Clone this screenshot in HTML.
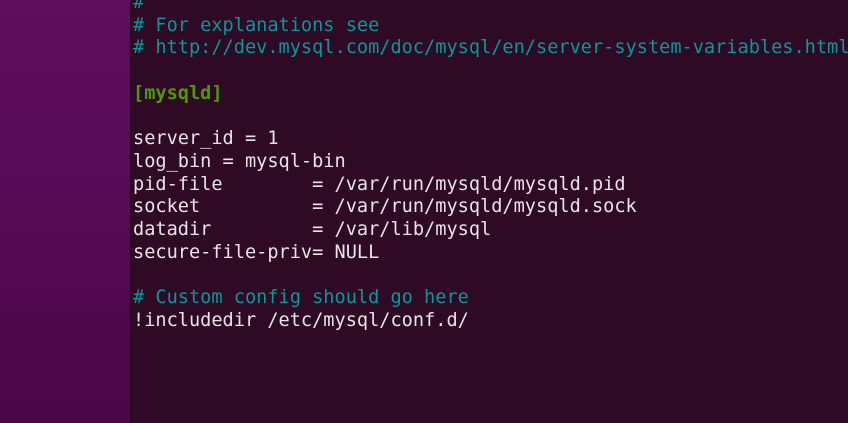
<!DOCTYPE html>
<html><head><meta charset="utf-8"><style>
html,body{margin:0;padding:0;width:848px;height:423px;overflow:hidden}
body{background:linear-gradient(180deg,#5e0e5c 0%,#560a54 50%,#4a0746 100%);position:relative}
.term{position:absolute;left:130px;top:0;width:718px;height:423px;background:#2f0a25;border-left:2px solid #2a0a22}
pre{margin:0;position:absolute;left:1px;top:-8px;font-family:"DejaVu Sans Mono","Liberation Mono",monospace;font-size:18.6px;line-height:22.7px;color:#e8e4e6;white-space:pre}
.c{color:#06989a}.g{color:#4e9a06;font-weight:bold}
</style></head><body>
<div class="term"><pre><span class="c">#
# For explanations see
# http://dev.mysql.com/doc/mysql/en/server-system-variables.html</span>

<span class="g">[mysqld]</span>

server_id = 1
log_bin = mysql-bin
pid-file        = /var/run/mysqld/mysqld.pid
socket          = /var/run/mysqld/mysqld.sock
datadir         = /var/lib/mysql
secure-file-priv= NULL

<span class="c"># Custom config should go here</span>
!includedir /etc/mysql/conf.d/
</pre></div>
</body></html>
